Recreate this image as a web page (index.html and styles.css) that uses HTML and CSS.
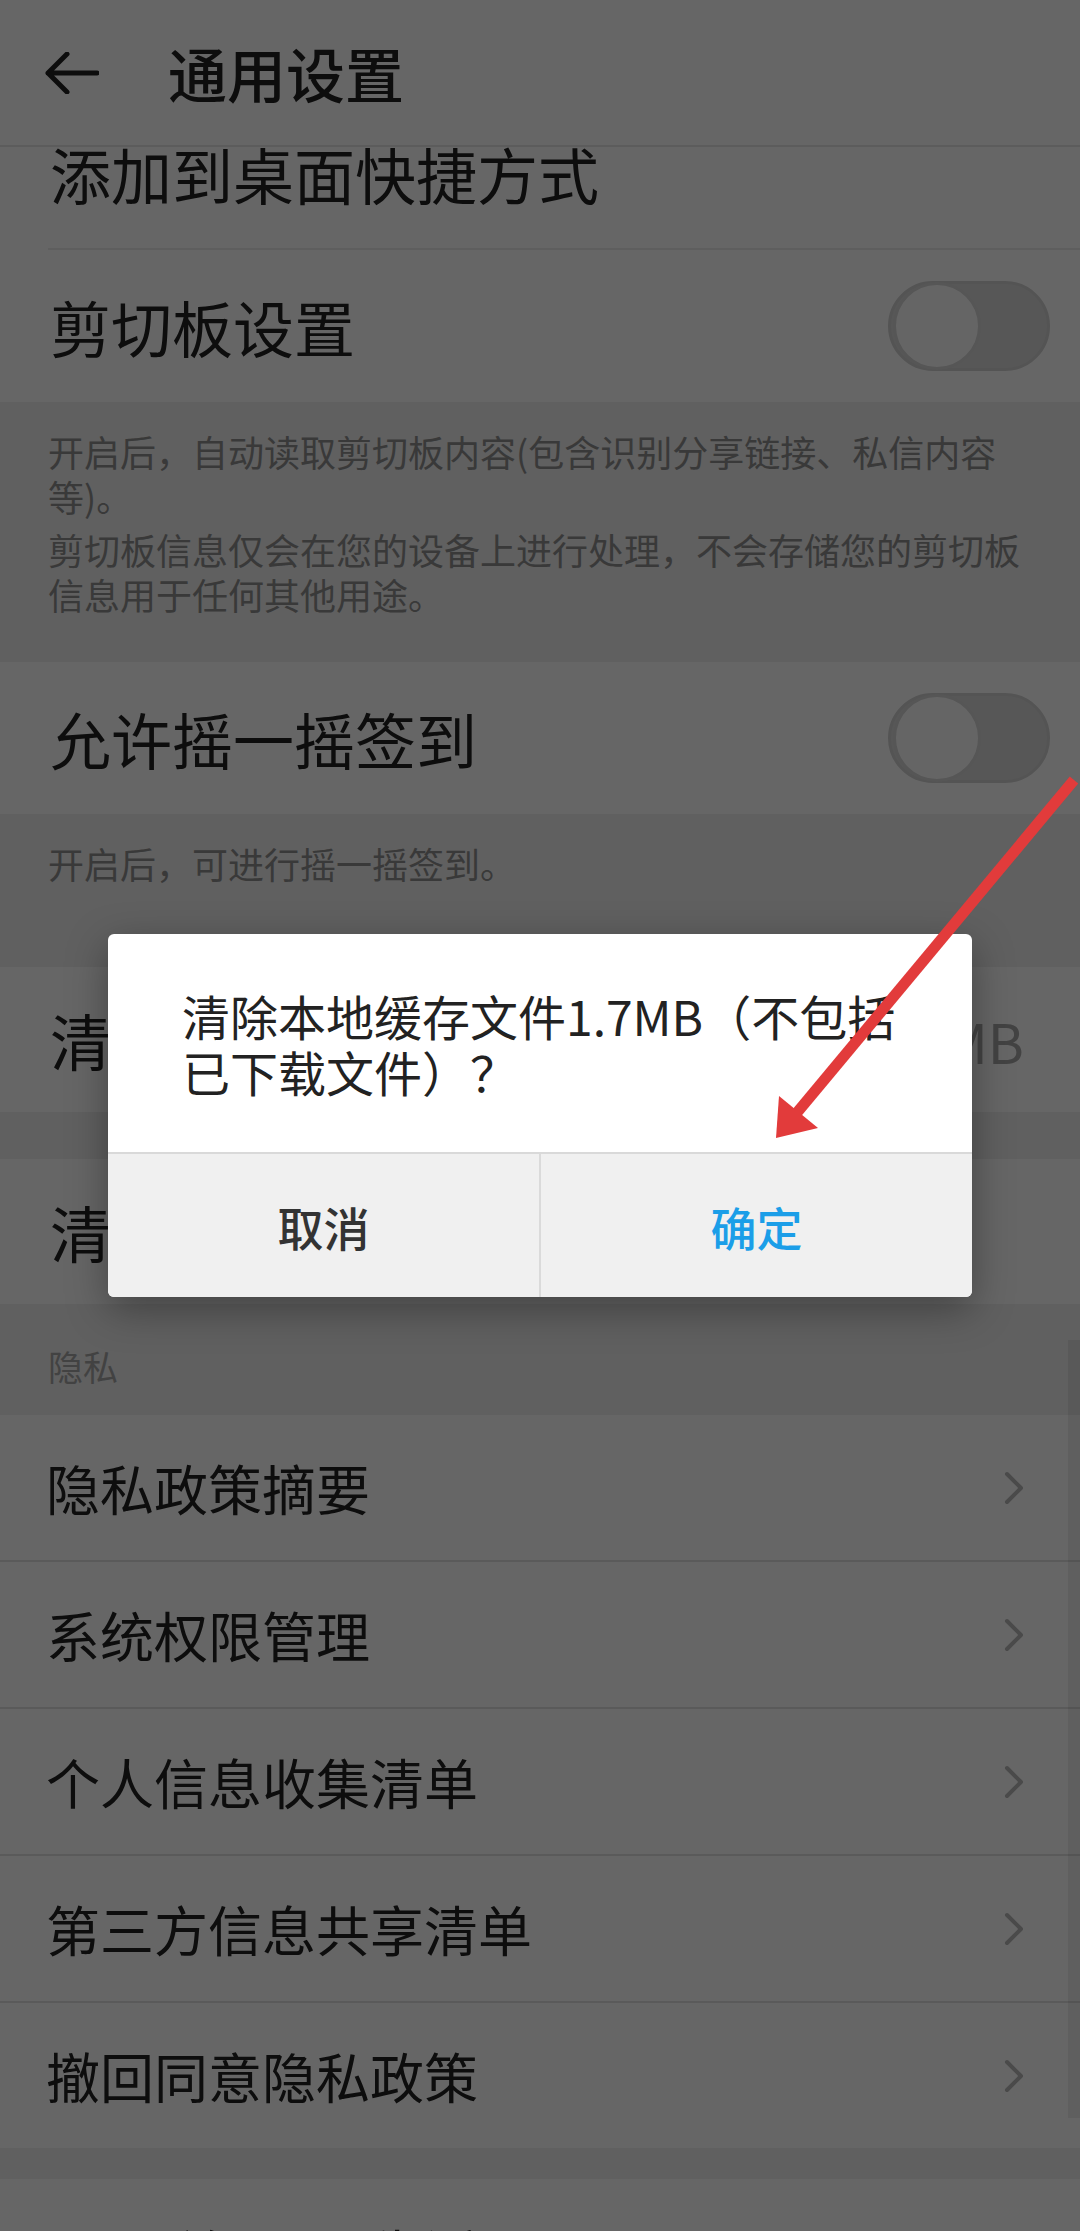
FILE: index.html
```html
<!doctype html>
<html>
  <head>
    <meta charset="utf-8">
    <title>通用设置</title>
    <link rel="stylesheet" href="styles.css">
  </head>
  <body>
    <div class="screen">
      <header class="topbar">
        <svg class="back" viewBox="0 0 54 42">
          <path d="M52 21H3M22 2L3 21l19 19" fill="none" stroke="#222" stroke-width="5" stroke-linecap="round" stroke-linejoin="round"/>
        </svg>
        <div class="title">通用设置</div>
      </header>

      <main class="content">
        <div class="group">
          <div class="row row-lg divided">添加到桌面快捷方式</div>
          <div class="row row-lg">
            <span>剪切板设置</span>
            <span class="switch"></span>
          </div>
        </div>
        <div class="note">
          <p>开启后，自动读取剪切板内容(包含识别分享链接、私信内容等)。</p>
          <p>剪切板信息仅会在您的设备上进行处理，不会存储您的剪切板信息用于任何其他用途。</p>
        </div>

        <div class="group">
          <div class="row row-lg">
            <span>允许摇一摇签到</span>
            <span class="switch"></span>
          </div>
        </div>
        <div class="note note-single">
          <p>开启后，可进行摇一摇签到。</p>
        </div>

        <div class="group">
          <div class="row row-clear">
            <span>清除缓存</span>
            <span class="value">1.7MB</span>
          </div>
        </div>
        <div class="gap"></div>
        <div class="group">
          <div class="row row-clear">
            <span>清除已下载文件</span>
          </div>
        </div>

        <div class="section-title">隐私</div>
        <div class="group">
          <div class="row row-md line">
            <span>隐私政策摘要</span>
            <svg class="chevron" viewBox="0 0 20 34"><path d="M3 3l14 14L3 31" fill="none" stroke="#b8b8b8" stroke-width="4" stroke-linecap="round" stroke-linejoin="round"/></svg>
          </div>
          <div class="row row-md line">
            <span>系统权限管理</span>
            <svg class="chevron" viewBox="0 0 20 34"><path d="M3 3l14 14L3 31" fill="none" stroke="#b8b8b8" stroke-width="4" stroke-linecap="round" stroke-linejoin="round"/></svg>
          </div>
          <div class="row row-md line">
            <span>个人信息收集清单</span>
            <svg class="chevron" viewBox="0 0 20 34"><path d="M3 3l14 14L3 31" fill="none" stroke="#b8b8b8" stroke-width="4" stroke-linecap="round" stroke-linejoin="round"/></svg>
          </div>
          <div class="row row-md line">
            <span>第三方信息共享清单</span>
            <svg class="chevron" viewBox="0 0 20 34"><path d="M3 3l14 14L3 31" fill="none" stroke="#b8b8b8" stroke-width="4" stroke-linecap="round" stroke-linejoin="round"/></svg>
          </div>
          <div class="row row-md">
            <span>撤回同意隐私政策</span>
            <svg class="chevron" viewBox="0 0 20 34"><path d="M3 3l14 14L3 31" fill="none" stroke="#b8b8b8" stroke-width="4" stroke-linecap="round" stroke-linejoin="round"/></svg>
          </div>
        </div>
        <div class="gap gap-sm"></div>
        <div class="group">
          <div class="row row-md row-about">关于115生活</div>
        </div>
      </main>

      <div class="scrollbar"></div>
      <div class="mask"></div>

      <div class="dialog">
        <div class="dialog-msg">清除本地缓存文件1.7MB（不包括已下载文件）？</div>
        <div class="dialog-actions">
          <div class="dialog-btn">取消</div>
          <div class="dialog-btn primary">确定</div>
        </div>
      </div>

      <!-- red hint arrow pointing at the confirm button -->
      <svg class="hint" viewBox="0 0 1080 2231">
        <line x1="1074" y1="780" x2="795" y2="1115" stroke="#e23b3b" stroke-width="11" stroke-linecap="butt"/>
        <polygon points="776,1138 779,1096 818,1128" fill="#e23b3b"/>
      </svg>
    </div>
  </body>
</html>
```

FILE: styles.css
```css
* {
  box-sizing: border-box;
  margin: 0;
  padding: 0;
}

html,
body {
  width: 1080px;
  height: 2231px;
  overflow: hidden;
}

body {
  font-family: "Noto Sans CJK SC", "Noto Sans", sans-serif;
  background: #f0f0f0;
  color: #222;
}

.screen {
  position: relative;
  width: 1080px;
  height: 2231px;
  overflow: hidden;
}

.topbar {
  position: absolute;
  top: 0;
  left: 0;
  right: 0;
  z-index: 1;
  height: 147px;
  background: #fff;
  border-bottom: 2px solid #e6e6e6;
  display: flex;
  align-items: center;
  padding-left: 45px;
}
.back {
  width: 54px;
  height: 42px;
}
.title {
  margin-left: 69px;
  font-size: 59px;
  font-weight: 500;
}

.content {
  padding-top: 98px;
}

.group {
  background: #fff;
}

.row {
  display: flex;
  align-items: center;
  justify-content: space-between;
  padding: 0 30px 0 50px;
}
.row-lg {
  height: 152px;
  font-size: 61px;
}
.row-md {
  height: 145px;
  font-size: 54px;
  padding-left: 46px;
  padding-right: 56px;
}
.row-clear {
  height: 145px;
  font-size: 61px;
  padding-right: 56px;
}
.row-clear .value {
  font-size: 55px;
}
.row.divided {
  margin-left: 48px;
  padding-left: 2px;
  border-bottom: 2px solid #ebebeb;
}
.row.line {
  height: 147px;
  border-bottom: 2px solid #e2e2e2;
}
.row-about {
  height: 146px;
  padding-left: 172px;
}

.value {
  color: #a8a8a8;
}

.chevron {
  width: 20px;
  height: 34px;
}

.switch {
  width: 162px;
  height: 90px;
  border-radius: 45px;
  background: #dadada;
  border: 3px solid #d2d2d2;
  display: flex;
  align-items: center;
  padding-left: 2px;
}
.switch::before {
  content: "";
  width: 82px;
  height: 82px;
  border-radius: 50%;
  background: #fdfdfd;
  border: 3px solid #d6d6d6;
}

.note {
  height: 260px;
  padding: 27px 50px 0 48px;
  font-size: 36px;
  line-height: 45px;
  color: #8e8e8e;
}
.note p + p {
  margin-top: 8px;
}
.note-single {
  height: 153px;
}

.gap {
  height: 47px;
}
.gap-sm {
  height: 31px;
}

.section-title {
  height: 111px;
  padding: 37px 48px 0;
  font-size: 35px;
  line-height: 50px;
  color: #a6a6a6;
}

.scrollbar {
  position: absolute;
  right: 0;
  top: 1340px;
  width: 12px;
  height: 778px;
  background: rgba(0, 0, 0, 0.07);
}

.mask {
  position: absolute;
  inset: 0;
  z-index: 2;
  background: rgba(0, 0, 0, 0.6);
}

.dialog {
  position: absolute;
  left: 108px;
  top: 934px;
  z-index: 3;
  width: 864px;
  background: #fff;
  border-radius: 6px;
  overflow: hidden;
  box-shadow: 0 12px 40px rgba(0, 0, 0, 0.35);
}
.dialog-msg {
  height: 218px;
  padding: 53px 60px 0 74px;
  font-size: 48px;
  line-height: 56px;
  color: #222;
}
.dialog-actions {
  display: flex;
  height: 145px;
  border-top: 2px solid #d9d9d9;
  background: #f0f0f0;
}
.dialog-btn {
  flex: 1;
  display: flex;
  align-items: center;
  justify-content: center;
  font-size: 46px;
  font-weight: 500;
  color: #333;
}
.dialog-btn + .dialog-btn {
  border-left: 2px solid #dadada;
}
.dialog-btn.primary {
  color: #1b9ee8;
}

.hint {
  position: absolute;
  top: 0;
  left: 0;
  z-index: 4;
  width: 1080px;
  height: 2231px;
  pointer-events: none;
}
```
